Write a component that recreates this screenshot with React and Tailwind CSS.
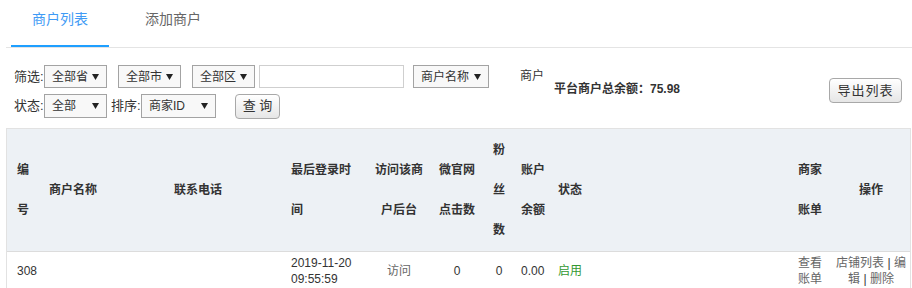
import React from "react";

function Select({ label, w }) {
  return (
    <div className={`${w} h-full flex items-center justify-between border border-[#a3a3a3] bg-[#f8f8f8] pl-[7px] pr-[7px] text-[12px] text-[#333]`}>
      <span>{label}</span>
      <svg width="7" height="6" viewBox="0 0 7 6"><path d="M0 0h7L3.5 6z" fill="#222" /></svg>
    </div>
  );
}

function Btn({ children, className = "" }) {
  return (
    <button className={`rounded-[4px] border border-[#a8a8a8] bg-gradient-to-b from-white to-[#e6e6e6] text-[13px] text-[#333] ${className}`}>
      {children}
    </button>
  );
}

const cols = [
  { w: "w-[32px]", p: "px-[10px] text-left" },
  { w: "w-[125px]", p: "px-[10px] text-left" },
  { w: "w-[117px]", p: "px-[10px] text-left" },
  { w: "w-[84px]", p: "px-[10px] text-left" },
  { w: "w-[68px]", p: "px-[10px] text-center" },
  { w: "w-[48px]", p: "px-[6px] text-center" },
  { w: "w-[36px]", p: "px-[10px] text-center" },
  { w: "w-[37px]", p: "px-[4px] text-left" },
  { w: "w-[234px]", p: "px-[4px] text-left" },
  { w: "w-[44px]", p: "px-[10px] text-left" },
  { w: "w-[78px]", p: "px-[3px] text-center" },
];

const heads = ["编号", "商户名称", "联系电话", "最后登录时间", "访问该商户后台", "微官网点击数", "粉丝数", "账户余额", "状态", "商家账单", "操作"];

export default function App() {
  return (
    <div className="w-[912px] h-[288px] overflow-hidden bg-white font-[Liberation_Sans,Noto_Sans_CJK_SC,sans-serif] text-[#333]">
      {/* tabs */}
      <div className="ml-[6px] flex border-b border-[#e4e4e4] pl-[5px] gap-[15px]">
        <div className="h-[47px] px-[21px] leading-[39px] text-[14px] text-[#3f9bf5] border-b-2 border-[#1e9fff]">商户列表</div>
        <div className="h-[47px] px-[21px] leading-[39px] text-[14px] text-[#666]">添加商户</div>
      </div>

      {/* filters */}
      <div className="ml-[6px] pl-[8px] pr-[10px] pt-[17px] flex">
        <div className="flex flex-col gap-[6px]">
          <div className="flex items-center h-[23px]">
            <span className="text-[13px] w-[30px]">筛选:</span>
            <Select label="全部省" w="w-[63px]" />
            <div className="ml-[11px] h-full"><Select label="全部市" w="w-[63px]" /></div>
            <div className="ml-[11px] h-full"><Select label="全部区" w="w-[63px]" /></div>
            <div className="ml-[4px] w-[145px] h-full border border-[#cfcfcf] bg-white" />
            <div className="ml-[9px] h-full"><Select label="商户名称" w="w-[76px]" /></div>
          </div>
          <div className="flex items-center h-[24px]">
            <span className="text-[13px] w-[30px]">状态:</span>
            <Select label="全部" w="w-[63px]" />
            <span className="text-[13px] ml-[4px] w-[30px]">排序:</span>
            <Select label="商家ID" w="w-[75px]" />
            <Btn className="ml-[19px] w-[45px] h-[25px]">查 询</Btn>
          </div>
        </div>
        <div className="ml-[31px] pt-[5px] text-[12px] leading-[12px]">
          <div>商户</div>
          <div className="ml-[34px] mt-[1px] font-bold">平台商户总余额：75.98</div>
        </div>
        <Btn className="ml-auto mt-[13px] w-[73px] h-[25px] tracking-[1px]">导出列表</Btn>
      </div>

      {/* table */}
      <div className="ml-[6px] mt-[10px] w-[905px] border border-[#e2e2e2]">
        <table className="w-full table-fixed border-collapse text-[12px]">
          <colgroup>
            {cols.map((c, i) => <col key={i} className={c.w} />)}
          </colgroup>
          <thead>
            <tr className="bg-[#edf1f5] border-b border-[#dcdcdc]">
              {heads.map((h, i) => (
                <th key={i} className={`${cols[i].p} py-px leading-[40px] font-bold align-middle`}>{h}</th>
              ))}
            </tr>
          </thead>
          <tbody>
            <tr className="leading-[16px]">
              <td className={`${cols[0].p} py-[3px]`}>308</td>
              <td className={cols[1].p}></td>
              <td className={cols[2].p}></td>
              <td className={`${cols[3].p} py-[3px]`}>2019-11-20 09:55:59</td>
              <td className={`${cols[4].p} text-[#666]`}>访问</td>
              <td className={cols[5].p}>0</td>
              <td className={cols[6].p}>0</td>
              <td className={cols[7].p}>0.00</td>
              <td className={`${cols[8].p} text-[#339933]`}>启用</td>
              <td className={`${cols[9].p} text-[#666]`}>查看账单</td>
              <td className={`${cols[10].p} text-[#666]`}>
                店铺列表 <span className="text-[#333]">|</span> 编辑 <span className="text-[#333]">|</span> 删除
              </td>
            </tr>
          </tbody>
        </table>
      </div>
    </div>
  );
}
